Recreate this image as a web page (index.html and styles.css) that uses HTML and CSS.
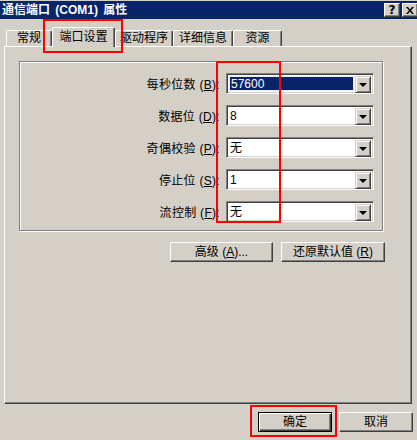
FILE: index.html
```html
<!DOCTYPE html>
<html lang="zh-CN">
<head>
    <meta charset="UTF-8">
    <title>通信端口 (COM1) 属性</title>
    <link rel="stylesheet" href="styles.css">
</head>
<body>
    <div class="window">
        <div class="titlebar">
            <span class="title">通信端口 (COM1) 属性</span>
            <div class="caption-buttons">
                <div class="cap-btn help">?</div>
                <div class="cap-btn close">
                    <svg width="8" height="7" viewBox="0 0 8 7"><path d="M0 0h2l2 2.5 2-2.5h2l-3 3.5 3 3.5h-2l-2-2.5-2 2.5h-2l3-3.5z" fill="#000"/></svg>
                </div>
            </div>
        </div>

        <div class="tabs">
            <div class="tab t1">常规</div>
            <div class="tab active">端口设置</div>
            <div class="tab t3">驱动程序</div>
            <div class="tab t4">详细信息</div>
            <div class="tab t5">资源</div>
        </div>

        <div class="panel">
            <div class="group">
                <div class="row">
                    <label>每秒位数 (<u>B</u>):</label>
                    <div class="combo focus">
                        <div class="value"><span>57600</span></div>
                        <div class="drop"><i></i></div>
                    </div>
                </div>
                <div class="row">
                    <label>数据位 (<u>D</u>):</label>
                    <div class="combo">
                        <div class="value">8</div>
                        <div class="drop"><i></i></div>
                    </div>
                </div>
                <div class="row">
                    <label>奇偶校验 (<u>P</u>):</label>
                    <div class="combo">
                        <div class="value">无</div>
                        <div class="drop"><i></i></div>
                    </div>
                </div>
                <div class="row">
                    <label>停止位 (<u>S</u>):</label>
                    <div class="combo">
                        <div class="value">1</div>
                        <div class="drop"><i></i></div>
                    </div>
                </div>
                <div class="row">
                    <label>流控制 (<u>F</u>):</label>
                    <div class="combo">
                        <div class="value">无</div>
                        <div class="drop"><i></i></div>
                    </div>
                </div>
            </div>
            <div class="panel-buttons">
                <div class="btn wide-a">高级 (<u>A</u>)...</div>
                <div class="btn wide-b">还原默认值 (<u>R</u>)</div>
            </div>
        </div>

        <div class="dialog-buttons">
            <div class="btn default">确定</div>
            <div class="btn">取消</div>
        </div>

        <!-- red annotation boxes -->
        <div class="mark mark-tab"></div>
        <div class="mark mark-combos"></div>
        <div class="mark mark-ok"></div>
    </div>
</body>
</html>
```

FILE: styles.css
```css
body {
    margin: 0;
    background: #d4d0c8;
    font-family: "Liberation Sans", "Noto Sans CJK SC", sans-serif;
    font-size: 12px;
    color: #000;
}
.window {
    position: relative;
    width: 417px;
    height: 440px;
    overflow: hidden;
    background: #d4d0c8;
}
.titlebar {
    margin-top: 1px;
    height: 18px;
    background: #0a246a;
    color: #fff;
    display: flex;
    align-items: center;
    justify-content: space-between;
    padding-left: 2px;
}
.title {
    font-weight: bold;
    font-size: 12px;
    line-height: 18px;
    word-spacing: 2px;
}
.caption-buttons {
    display: flex;
    gap: 2px;
    margin-right: -1px;
}
.cap-btn {
    width: 16px;
    height: 14px;
    box-sizing: border-box;
    background: #d4d0c8;
    border-top: 1px solid #fff;
    border-left: 1px solid #fff;
    border-right: 1px solid #404040;
    border-bottom: 1px solid #404040;
    box-shadow: inset -1px -1px 0 #808080;
    color: #000;
    display: flex;
    align-items: center;
    justify-content: center;
}
.cap-btn.help {
    font-family: "DejaVu Sans", sans-serif;
    font-weight: bold;
    font-size: 12px;
    line-height: 12px;
}

/* tabs */
.tabs {
    display: flex;
    align-items: flex-end;
    height: 19px;
    margin-top: 8px;
    padding-left: 6px;
    position: relative;
    z-index: 2;
}
.tab {
    box-sizing: border-box;
    height: 16px;
    background: #d4d0c8;
    border-top: 1px solid #fff;
    border-left: 1px solid #fff;
    border-right: 1px solid #404040;
    box-shadow: inset -1px 0 0 #808080;
    border-radius: 2px 2px 0 0;
    text-align: center;
    line-height: 15px;
}
.tab.t1 { width: 46px; }
.tab.active {
    width: 63px;
    height: 20px;
    margin-bottom: -1px;
    line-height: 18px;
    position: relative;
}
.tab.t3 { width: 58px; }
.tab.t4 { width: 60px; }
.tab.t5 { width: 49px; }

/* page panel */
.panel {
    box-sizing: border-box;
    width: 408px;
    height: 358px;
    margin-left: 4px;
    border-top: 1px solid #fff;
    border-left: 1px solid #fff;
    border-right: 1px solid #404040;
    border-bottom: 1px solid #404040;
    box-shadow: inset -1px -1px 0 #808080;
    padding: 14px 0 0 14px;
    position: relative;
    z-index: 1;
}
.group {
    box-sizing: border-box;
    width: 364px;
    height: 170px;
    border: 1px solid #808080;
    box-shadow: 1px 1px 0 #fff, inset 1px 1px 0 #fff;
    padding: 11px 8px 0 0;
    display: flex;
    flex-direction: column;
    gap: 11px;
}
.row {
    display: flex;
    justify-content: flex-end;
    align-items: center;
    height: 21px;
}
.row label {
    margin-right: 6px;
    letter-spacing: 0.3px;
}
.combo {
    box-sizing: border-box;
    width: 148px;
    height: 21px;
    background: #fff;
    border-top: 1px solid #808080;
    border-left: 1px solid #808080;
    border-right: 1px solid #fff;
    border-bottom: 1px solid #fff;
    box-shadow: inset 1px 1px 0 #404040, inset -1px -1px 0 #d4d0c8;
    padding: 2px;
    display: flex;
}
.combo .value {
    flex: 1;
    padding-left: 1px;
    line-height: 17px;
}
.combo.focus .value {
    display: flex;
    padding: 1px;
}
.combo.focus .value span {
    flex: 1;
    margin-right: 1px;
    background: #0a246a;
    color: #fff;
    outline: 1px dotted #e8d890;
    line-height: 15px;
    padding-left: 1px;
}
.drop {
    width: 16px;
    height: 17px;
    box-sizing: border-box;
    background: #d4d0c8;
    border-top: 1px solid #d4d0c8;
    border-left: 1px solid #d4d0c8;
    border-right: 1px solid #404040;
    border-bottom: 1px solid #404040;
    box-shadow: inset 1px 1px 0 #fff, inset -1px -1px 0 #808080;
    display: flex;
    align-items: center;
    justify-content: center;
}
.drop i {
    width: 0;
    height: 0;
    border-left: 4px solid transparent;
    border-right: 4px solid transparent;
    border-top: 4px solid #000;
    margin-top: 1px;
}

/* buttons */
.btn {
    box-sizing: border-box;
    height: 20px;
    width: 74px;
    background: #d4d0c8;
    border-top: 1px solid #fff;
    border-left: 1px solid #fff;
    border-right: 1px solid #404040;
    border-bottom: 1px solid #404040;
    box-shadow: inset -1px -1px 0 #808080;
    text-align: center;
    line-height: 18px;
}
.btn.default {
    border: 1px solid #000;
    box-shadow: inset 1px 1px 0 #fff, inset -1px -1px 0 #404040, inset -2px -2px 0 #808080;
}
.btn.wide-a { width: 103px; }
.btn.wide-b { width: 104px; }
.panel-buttons {
    display: flex;
    justify-content: flex-end;
    gap: 8px;
    width: 366px;
    margin-top: 11px;
}
.dialog-buttons {
    display: flex;
    justify-content: flex-end;
    gap: 7px;
    margin-top: 8px;
    padding-right: 4px;
}

/* annotation overlay */
.mark {
    position: absolute;
    border: 2px solid #ff0000;
    box-sizing: border-box;
    z-index: 5;
}
.mark-tab { left: 43px; top: 19px; width: 80px; height: 34px; }
.mark-combos { left: 216px; top: 61px; width: 65px; height: 162px; }
.mark-ok { left: 250px; top: 405px; width: 87px; height: 32px; }
```
